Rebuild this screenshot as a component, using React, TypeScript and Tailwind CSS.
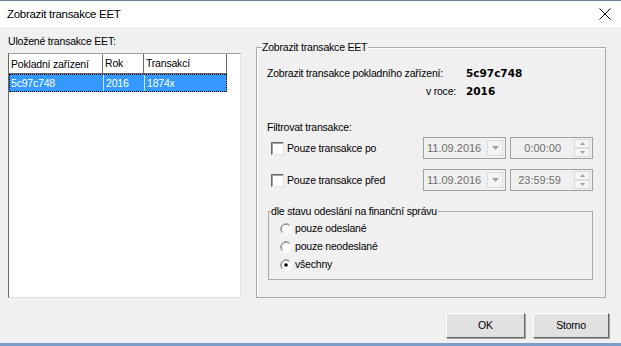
import React from "react";

const font = { fontFamily: '"Liberation Sans", Arial, sans-serif' };
const boldFont = { fontFamily: '"DejaVu Sans", Verdana, sans-serif' };

const Checkbox = () => (
  <span className="inline-block w-[13px] h-[13px] bg-white border border-t-[#696969] border-l-[#696969] border-r-[#e3e3e3] border-b-[#e3e3e3] shadow-[inset_1px_1px_0_#a0a0a0]" />
);

const Radio = ({ checked }: { checked?: boolean }) => (
  <svg width="12" height="12" viewBox="0 0 12 12" className="shrink-0">
    <path d="M10 2.2A5.4 5.4 0 0 0 2.2 10" fill="none" stroke="#a0a0a0" />
    <path d="M9 3A4.2 4.2 0 0 0 3 9" fill="none" stroke="#696969" />
    <path d="M2.2 10A5.4 5.4 0 0 0 10 2.2" fill="none" stroke="#ffffff" />
    <circle cx="6" cy="6" r="4" fill="#ffffff" />
    {checked && <circle cx="6" cy="6" r="1.8" fill="#000000" />}
  </svg>
);

const DatePicker = () => (
  <div className="w-[83px] h-[22px] flex items-center border border-[#a0a0a0] bg-[#f0f0f0] pl-[3px] pr-[2px]">
    <span className="flex-1 text-[11px] tracking-normal text-[#6d6d6d]">11.09.2016</span>
    <span className="w-[16px] h-[16px] flex items-center justify-center border border-[#dcdcdc] bg-[#f4f4f4]">
      <svg width="7" height="4" viewBox="0 0 7 4">
        <path d="M0 0h7L3.5 4z" fill="#a0a0a0" />
      </svg>
    </span>
  </div>
);

const TimePicker = ({ value }: { value: string }) => (
  <div className="w-[83px] h-[22px] flex items-center border border-[#a0a0a0] bg-[#f0f0f0] pl-[3px] pr-[2px]">
    <span className="flex-1 text-right pr-[13px] text-[11px] tracking-normal text-[#6d6d6d]">{value}</span>
    <span className="w-[16px] h-[18px] flex flex-col">
      <span className="flex-1 flex items-center justify-center border border-[#dcdcdc] bg-[#f4f4f4]">
        <svg width="5" height="3" viewBox="0 0 5 3">
          <path d="M0 3h5L2.5 0z" fill="#a0a0a0" />
        </svg>
      </span>
      <span className="flex-1 flex items-center justify-center border border-[#dcdcdc] bg-[#f4f4f4]">
        <svg width="5" height="3" viewBox="0 0 5 3">
          <path d="M0 0h5L2.5 3z" fill="#a0a0a0" />
        </svg>
      </span>
    </span>
  </div>
);

const App = () => {
  return (
    <div
      className="w-[621px] h-[346px] flex flex-col bg-[#f0f0f0] text-[10.5px] tracking-[-0.2px] leading-[13px] text-black whitespace-nowrap overflow-hidden"
      style={font}
    >
      <div className="h-[1px] bg-[#6f8198]" />

      {/* Title bar */}
      <div className="h-[26px] bg-white flex items-center justify-between pl-[7px] pr-[10px]">
        <span className="text-[11.5px] tracking-[-0.3px] text-black">Zobrazit transakce EET</span>
        <svg width="12" height="12" viewBox="0 0 12 12">
          <path d="M0.5 0.5l11 11M11.5 0.5l-11 11" stroke="#000" strokeWidth="1" />
        </svg>
      </div>

      <div className="flex-1 flex flex-col">
        <div className="flex items-start">
          {/* Left list */}
          <div className="ml-[8px] mt-[8px] w-[233px]">
            <div>Uložené transakce EET:</div>
            <div className="mt-[5px] h-[245px] bg-white border border-t-[#a0a0a0] border-l-[#696969] border-r-[#e3e3e3] border-b-[#dcdcdc]">
              <div className="flex w-[218px] h-[20px]">
                <div className="w-[94px] pl-[2px] flex items-center border-r border-b border-[#696969] border-t border-t-white">
                  Pokladní zařízení
                </div>
                <div className="w-[41px] pl-[2px] flex items-center border-r border-b border-[#696969]">
                  Rok
                </div>
                <div className="w-[83px] pl-[2px] flex items-center border-r border-b border-[#696969]">
                  Transakcí
                </div>
              </div>
              <div className="flex w-[218px] h-[18px] bg-[#3399ff] text-white border border-dotted border-black">
                <div className="w-[93px] pl-[1px] flex items-center">5c97c748</div>
                <div className="w-[41px] pl-[2px] flex items-center border-l border-[#cfe5ff]">2016</div>
                <div className="flex-1 pl-[2px] flex items-center border-l border-[#cfe5ff]">1874x</div>
              </div>
            </div>
          </div>

          {/* Right group */}
          <div className="relative ml-[15px] mt-[20px] w-[350px] h-[251px] border border-[#a9a9a9] shadow-[inset_1px_1px_0_#ffffff] pl-[10px] pt-[19px]">
            <span className="absolute -top-[7px] left-[5px] bg-[#f0f0f0] pr-[1px]">Zobrazit transakce EET</span>

            <div className="grid grid-cols-[189px_auto] gap-x-[10px] gap-y-[5px]">
              <span>Zobrazit transakce pokladního zařízení:</span>
              <span className="font-bold text-[10.5px] tracking-normal" style={boldFont}>5c97c748</span>
              <span className="text-right">v roce:</span>
              <span className="font-bold text-[10.5px] tracking-normal" style={boldFont}>2016</span>
            </div>

            <div className="mt-[23px]">Filtrovat transakce:</div>

            <div className="mt-[3px] flex items-center">
              <span className="ml-[4px] flex"><Checkbox /></span>
              <span className="ml-[3px] w-[136px]">Pouze transakce po</span>
              <DatePicker />
              <span className="ml-[4px]"><TimePicker value="0:00:00" /></span>
            </div>

            <div className="mt-[10px] flex items-center">
              <span className="ml-[4px] flex"><Checkbox /></span>
              <span className="ml-[3px] w-[136px]">Pouze transakce před</span>
              <DatePicker />
              <span className="ml-[4px]"><TimePicker value="23:59:59" /></span>
            </div>

            {/* Inner group */}
            <div className="relative mt-[20px] ml-[1px] w-[325px] h-[69px] border border-[#a9a9a9] pl-[11px] pt-[10px] flex flex-col gap-[5px]">
              <span className="absolute -top-[7px] left-[2px] bg-[#f0f0f0] pr-[1px]">
                dle stavu odeslání na finanční správu
              </span>
              <div className="flex items-center gap-[3px]">
                <Radio />
                <span>pouze odeslané</span>
              </div>
              <div className="flex items-center gap-[3px]">
                <Radio />
                <span>pouze neodeslané</span>
              </div>
              <div className="flex items-center gap-[3px]">
                <Radio checked />
                <span>všechny</span>
              </div>
            </div>
          </div>
        </div>

        {/* Buttons */}
        <div className="mt-[15px] flex justify-end gap-[8px] pr-[12px]">
          <button className="w-[79px] h-[25px] bg-[#e1e1e1] border border-t-white border-l-white border-r-[#696969] border-b-[#696969] shadow-[1px_1px_0_#a0a0a0]">
            OK
          </button>
          <button className="w-[76px] h-[25px] bg-[#e1e1e1] border border-t-white border-l-white border-r-[#696969] border-b-[#696969] shadow-[1px_1px_0_#a0a0a0]">
            Storno
          </button>
        </div>
      </div>

      <div className="h-[3px] bg-[#7a9cc9]" />
    </div>
  );
};

export default App;
